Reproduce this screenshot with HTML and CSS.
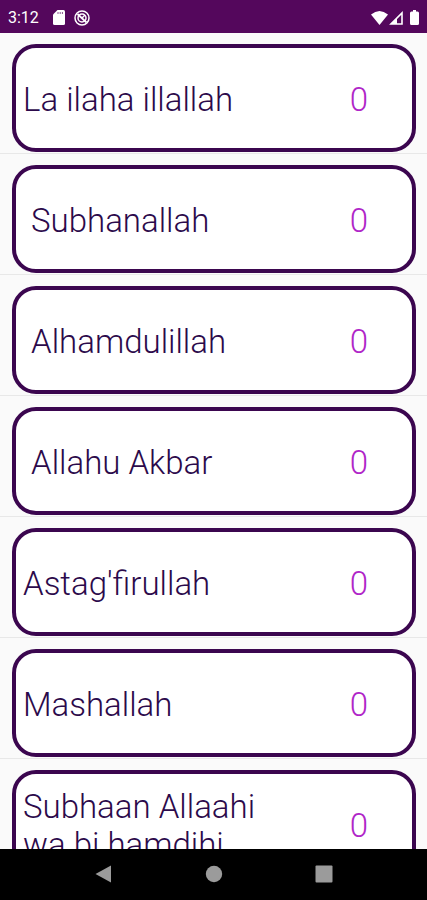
FILE: index.html
```html
<!DOCTYPE html>
<html lang="en">
<head>
<meta charset="utf-8">
<meta name="viewport" content="width=device-width, initial-scale=1">
<title>Dhikr counter</title>
<link rel="stylesheet" href="styles.css">
</head>
<body>
<header class="status">
  <span class="time">3:12</span>
  <svg class="sd" viewBox="0 0 12 15" aria-hidden="true"><path fill="#fff" d="M4.500 0H10.500Q12 0 12 1.500V13.500Q12 15 10.500 15H1.500Q0 15 0 13.500V4.500Z"/><path stroke="#54075c" stroke-opacity="0.700" d="M5 2v2M7.200 2v2M9.400 2v2"/></svg>
  <svg class="sync" viewBox="0 0 16 16" aria-hidden="true"><g fill="none" stroke="#fff"><circle cx="8" cy="8" r="7" stroke-width="1.500"/><circle cx="8" cy="8" r="4" stroke-width="1.500"/><path stroke-width="1.800" d="M3.500 4l9 8.500"/><path stroke-width="1.500" d="M8 8l3-3"/></g></svg>
  <span class="signals">
    <svg class="wifi" viewBox="0 0 17 14" aria-hidden="true"><path fill="#fff" d="M8.500 14L0 3.500Q8.500-3.500 17 3.500Z"/></svg>
    <svg class="cell" viewBox="0 0 14 14" aria-hidden="true"><path fill="none" stroke="#fff" stroke-width="1.600" d="M13 2V13H2Z"/><path fill="#fff" d="M8 7V13H1.500Z"/></svg>
    <svg class="battery" viewBox="0 0 9 15" aria-hidden="true"><path fill="#fff" d="M3 0H6V1.500H7.500Q9 1.500 9 3V13.500Q9 15 7.500 15H1.500Q0 15 0 13.500V3Q0 1.500 1.500 1.500H3Z"/></svg>
  </span>
</header>
<main class="list">
  <ul class="rows">
    <li class="row"><button class="card"><span class="name">La ilaha illallah</span><span class="count">0</span></button></li>
    <li class="row"><button class="card"><span class="name"> Subhanallah</span><span class="count">0</span></button></li>
    <li class="row"><button class="card"><span class="name"> Alhamdulillah</span><span class="count">0</span></button></li>
    <li class="row"><button class="card"><span class="name"> Allahu Akbar</span><span class="count">0</span></button></li>
    <li class="row"><button class="card"><span class="name">Astag'firullah</span><span class="count">0</span></button></li>
    <li class="row"><button class="card"><span class="name">Mashallah</span><span class="count">0</span></button></li>
    <li class="row"><button class="card"><span class="name">Subhaan Allaahi wa bi hamdihi</span><span class="count">0</span></button></li>
  </ul>
</main>
<nav class="navbar" aria-label="System">
  <button class="key" aria-label="Back"><svg viewBox="0 0 18 18"><path fill="#9b9b9b" d="M16 0.500V17.500L0.500 9Z"/></svg></button>
  <button class="key" aria-label="Home"><svg viewBox="0 0 18 18"><circle fill="#9b9b9b" cx="9" cy="9" r="8.200"/></svg></button>
  <button class="key" aria-label="Recent apps"><svg viewBox="0 0 18 18"><rect fill="#9b9b9b" x="0.500" y="0.500" width="17" height="17" rx="1"/></svg></button>
</nav>
</body>
</html>
```
FILE: styles.css
```css
* {
  box-sizing: border-box;
}

body {
  margin: 0;
  height: 100vh;
  display: flex;
  flex-direction: column;
  background: #fafafa;
  font-family: Roboto, "Liberation Sans", sans-serif;
}

button {
  margin: 0;
  padding: 0;
  border: 0;
  background: none;
  font: inherit;
  color: inherit;
}

svg {
  display: block;
}

.status {
  flex: none;
  display: flex;
  align-items: center;
  height: 33px;
  padding: 2px 8px 0;
  background: #54075c;
  color: #fff;
}

.time {
  margin-right: 14px;
  font-size: 16px;
  line-height: 20px;
}

.sd {
  width: 12px;
  height: 15px;
  margin-right: 9px;
}

.sync {
  width: 16px;
  height: 16px;
}

.signals {
  display: flex;
  align-items: center;
  margin-left: auto;
}

.wifi {
  width: 17px;
  height: 14px;
}

.cell {
  width: 14px;
  height: 14px;
  margin: 0 7px 0 1px;
}

.battery {
  width: 9px;
  height: 15px;
}

.list {
  flex: 1;
  min-height: 0;
  overflow: hidden;
}

.rows {
  margin: 0;
  padding: 0;
  list-style: none;
}

.row {
  padding: 11px 11px 1px 12px;
  border-bottom: 1px solid #e8e8e8;
}

.card {
  display: flex;
  align-items: center;
  width: 100%;
  min-height: 108px;
  padding: 3px 44px 0 7px;
  border: 4px solid #3b064f;
  border-radius: 24px;
  background: #fff;
  font-size: 33px;
  font-weight: 300;
  line-height: 38px;
  text-align: left;
}

.name {
  flex: 1;
  padding-right: 64px;
  color: #2c0a4b;
  white-space: pre-wrap;
}

.count {
  color: #b026c8;
}

.navbar {
  flex: none;
  display: flex;
  justify-content: center;
  gap: 92px;
  padding: 16px 0 17px;
  background: #000;
}

.key,
.key svg {
  width: 18px;
  height: 18px;
}
```
